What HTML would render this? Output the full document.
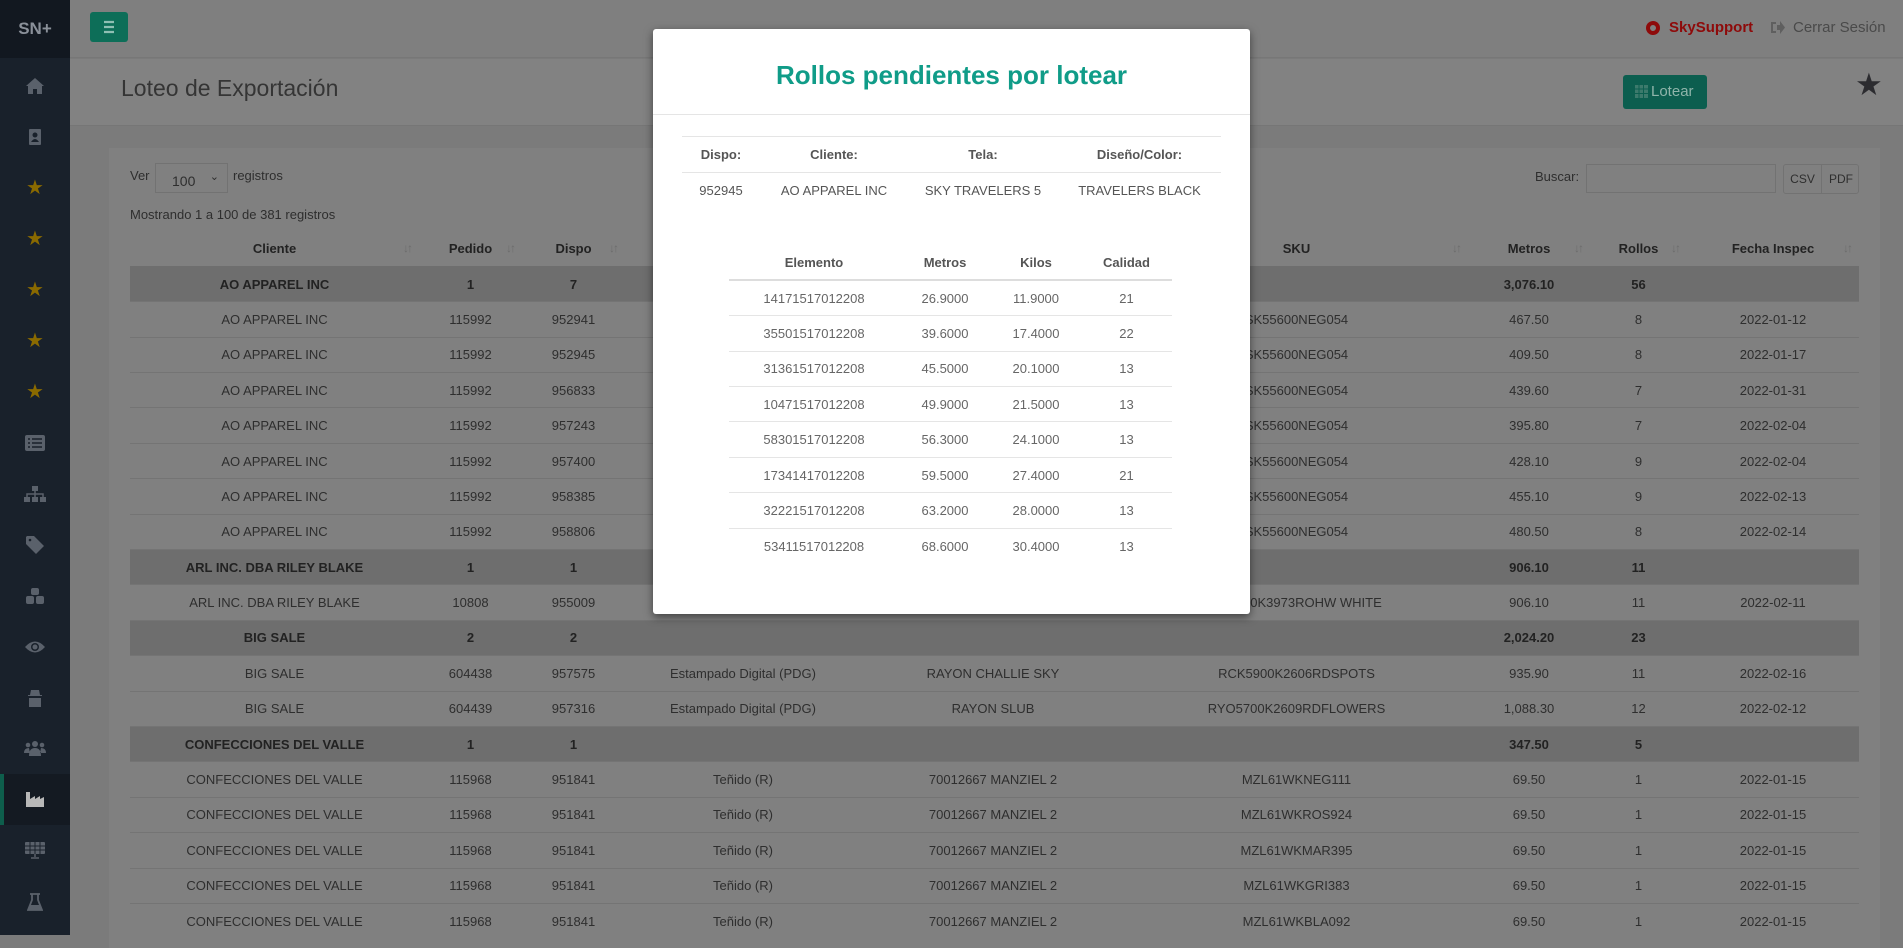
<!DOCTYPE html>
<html><head><meta charset="utf-8">
<style>
*{box-sizing:border-box;margin:0;padding:0}
body{width:1903px;height:935px;overflow:hidden;background:#7b7b7b;font-family:"Liberation Sans",sans-serif;font-size:13px;color:#333;position:relative}
.sb{position:absolute;left:0;top:0;width:70px;height:935px;background:#19212b}
.logo{height:58px;background:#121820;color:#8a9099;font-weight:bold;font-size:17px;text-align:center;line-height:58px}
.ic{position:absolute;left:0;width:70px;height:51px;display:flex;align-items:center;justify-content:center}
.top{position:absolute;left:70px;top:0;right:0;height:58px;background:#7f7f7f;border-bottom:1px solid #777}
.menu{position:absolute;left:90px;top:12px;width:38px;height:30px;background:#0d6e58;border-radius:3px}
.tbar{position:absolute;left:70px;top:59px;right:0;height:67px;background:#828282;border-bottom:1px solid #767676}
.title{position:absolute;left:121px;top:75px;font-size:23px;color:#353535}
.card{position:absolute;left:109px;top:148px;width:1771px;height:800px;background:#808080}
table.m{position:absolute;left:130px;top:231px;width:1729px;border-collapse:collapse;table-layout:fixed}
table.m td,table.m th{height:35.4px;text-align:center;color:#2e2e2e;font-size:13px;border-top:1px solid #747474;white-space:nowrap;overflow:hidden;position:relative}
table.m th{color:#222;font-weight:bold;border-top:none;border-bottom:1px solid #6e6e6e}
table.m tr.g td{background:#6e6e6e;font-weight:bold;color:#222}
.s{position:absolute;right:8px;top:10px;color:#6c6c6c;font-size:12px;letter-spacing:-2px}
.modal{position:absolute;left:653px;top:29px;width:597px;height:585px;background:#fff;border-radius:3px;box-shadow:0 3px 9px rgba(0,0,0,.5)}
.mt{height:86px;border-bottom:1px solid #e5e5e5;text-align:center;font-size:26px;font-weight:bold;color:#109c88;line-height:92px}
table.i{position:absolute;left:29px;top:107px;width:539px;border-collapse:collapse;border-top:1px solid #e5e5e5}
table.i th,table.i td{height:36px;text-align:center;color:#555;font-size:13px}
table.i th{border-bottom:1px solid #e5e5e5;font-weight:bold}
table.e{position:absolute;left:76px;top:216px;width:443px;border-collapse:collapse}
table.e th,table.e td{height:35.4px;text-align:center;color:#666;font-size:13px}
table.e th{border-bottom:2px solid #ddd;color:#555;font-weight:bold}
table.e td{border-bottom:1px solid #e5e5e5}
table.e tr:last-child td{border-bottom:none}
</style></head><body>
<div class="sb">
<div class="logo">SN+</div>
<div class="ic" style="top:60px"><svg width="20" height="18" viewBox="0 0 20 18"><path d="M10 1 L1 9 H3 V17 H8 V12 H12 V17 H17 V9 H19 Z" fill="#5a616b"/></svg></div>
<div class="ic" style="top:111px"><svg width="14" height="18"><rect x="1" y="1" width="12" height="16" rx="1" fill="#5a616b"/><circle cx="7" cy="7" r="2.5" fill="#19212b"/><path d="M3 14 Q7 8 11 14Z" fill="#19212b"/></svg></div>
<div class="ic" style="top:162px;color:#8a6a00;font-size:20px">★</div>
<div class="ic" style="top:213px;color:#8a6a00;font-size:20px">★</div>
<div class="ic" style="top:264px;color:#8a6a00;font-size:20px">★</div>
<div class="ic" style="top:315px;color:#8a6a00;font-size:20px">★</div>
<div class="ic" style="top:366px;color:#8a6a00;font-size:20px">★</div>
<div class="ic" style="top:417px"><svg width="20" height="16"><rect x="0" y="0" width="20" height="16" rx="2" fill="#5a616b"/><path d="M3 4h2M7 4h10M3 8h2M7 8h10M3 12h2M7 12h10" stroke="#19212b" stroke-width="1.5"/></svg></div>
<div class="ic" style="top:468px"><svg width="22" height="16"><rect x="8" y="0" width="6" height="5" fill="#5a616b"/><path d="M11 5v3M3 11V8h16v3M11 8v3" stroke="#5a616b" stroke-width="1.5" fill="none"/><rect x="0" y="11" width="6" height="5" fill="#5a616b"/><rect x="8" y="11" width="6" height="5" fill="#5a616b"/><rect x="16" y="11" width="6" height="5" fill="#5a616b"/></svg></div>
<div class="ic" style="top:519px"><svg width="18" height="18"><path d="M0 1v7l10 10 8-8L8 0H1Z" fill="#5a616b"/><circle cx="4" cy="4" r="1.3" fill="#19212b"/></svg></div>
<div class="ic" style="top:570px"><svg width="18" height="16"><rect x="5" y="0" width="8" height="7" rx="2" fill="#5a616b"/><rect x="0" y="8" width="8" height="8" rx="2" fill="#5a616b"/><rect x="10" y="8" width="8" height="8" rx="2" fill="#5a616b"/></svg></div>
<div class="ic" style="top:621px"><svg width="22" height="14"><path d="M1 7Q11 -4 21 7Q11 18 1 7Z" fill="#5a616b"/><circle cx="11" cy="7" r="4" fill="#19212b"/><circle cx="11" cy="7" r="2.5" fill="#5a616b"/></svg></div>
<div class="ic" style="top:672px"><svg width="16" height="18"><path d="M4 1h8l1 5H3Z M1 6h14v1H1Z M2 9h12v9H2Z" fill="#5a616b"/></svg></div>
<div class="ic" style="top:723px"><svg width="22" height="15"><circle cx="11" cy="3" r="3" fill="#5a616b"/><circle cx="4" cy="4" r="2.3" fill="#5a616b"/><circle cx="18" cy="4" r="2.3" fill="#5a616b"/><path d="M5 15q0-8 6-8t6 8Z M0 12q0-5 5-5l1 5Z M22 12q0-5-5-5l-1 5Z" fill="#5a616b"/></svg></div>
<div class="ic" style="top:774px;background:#141a22"><div style="position:absolute;left:0;top:0;width:4px;height:51px;background:#0e5e4c"></div><svg width="18" height="15"><path d="M0 15V0h4v7l5-3v3l5-3v3l4-2v10Z" fill="#b8b8b8"/></svg></div>
<div class="ic" style="top:825px"><svg width="20" height="17"><rect x="0" y="0" width="20" height="12" rx="1" fill="#5a616b"/><path d="M0 4h20M0 8h20M5 0v12M10 0v12M15 0v12" stroke="#19212b" stroke-width="1"/><path d="M10 12v3M6 16h8" stroke="#5a616b" stroke-width="1.5"/></svg></div>
<div class="ic" style="top:876px"><svg width="16" height="18"><path d="M3 1h10M5 1v6L1 17h14L11 7V1" stroke="#5a616b" stroke-width="1.8" fill="none"/><path d="M3 12h10l2 5H1Z" fill="#5a616b"/></svg></div>
</div>
<div class="top"></div>
<div style="position:absolute;left:1646px;top:21px;width:14px;height:14px;border-radius:50%;background:#8e0a0a"><div style="position:absolute;left:4px;top:4px;width:6px;height:6px;border-radius:50%;background:#7f7f7f"></div></div>
<div style="position:absolute;left:1669px;top:19px;color:#8e0a0a;font-size:15px;font-weight:bold">SkySupport</div>
<svg style="position:absolute;left:1771px;top:21px" width="14" height="13"><path d="M0 1h5v2H2v7h3v2H0Z M6 4h3V0l5 6.5L9 13V9H6Z" fill="#5f5f5f"/></svg>
<div style="position:absolute;left:1793px;top:19px;color:#4a4a4a;font-size:15px">Cerrar Sesión</div>
<div class="menu"><svg width="38" height="30"><path d="M14 10h10M14 15h10M14 20h10" stroke="#8fbfb3" stroke-width="2.2"/></svg></div>
<div class="tbar"></div>
<div class="title">Loteo de Exportación</div>
<div style="position:absolute;left:1623px;top:75px;width:84px;height:34px;background:#0c5e4f;border-radius:3px;color:#8fb4aa;font-size:15px;line-height:34px;padding-left:28px">Lotear<svg style="position:absolute;left:12px;top:10px" width="13" height="13"><path d="M0 0h13v13H0Z" fill="#3c7a6c"/><path d="M4 0v13M8.5 0v13M0 4h13M0 8.5h13" stroke="#0c5e4f"/></svg></div>
<div style="position:absolute;left:1855px;top:67px;font-size:31px;color:#2c2c30">★</div>
<div class="card"></div>
<div style="position:absolute;left:130px;top:168px;color:#2e2e2e">Ver</div>
<div style="position:absolute;left:155px;top:163px;width:73px;height:30px;border:1px solid #727272;color:#2e2e2e;font-size:14px;padding:9px 0 0 16px">100<span style="position:absolute;right:8px;top:6px;font-size:11px">⌄</span></div>
<div style="position:absolute;left:233px;top:168px;color:#2e2e2e">registros</div>
<div style="position:absolute;left:130px;top:207px;color:#2e2e2e">Mostrando 1 a 100 de 381 registros</div>
<div style="position:absolute;left:1535px;top:169px;color:#2e2e2e">Buscar:</div>
<div style="position:absolute;left:1586px;top:164px;width:190px;height:29px;border:1px solid #727272"></div>
<div style="position:absolute;left:1783px;top:164px;width:76px;height:30px;border:1px solid #727272;border-radius:3px;color:#2e2e2e;font-size:12px;line-height:28px"><span style="position:absolute;left:0;width:38px;text-align:center;border-right:1px solid #727272">CSV</span><span style="position:absolute;left:38px;width:38px;text-align:center">PDF</span></div>
<table class="m">
<colgroup><col style="width:289px"><col style="width:103px"><col style="width:103px"><col style="width:236px"><col style="width:264px"><col style="width:343px"><col style="width:122px"><col style="width:97px"><col style="width:172px"></colgroup>
<tr><th>Cliente<span class="s">↓↑</span></th><th>Pedido<span class="s">↓↑</span></th><th>Dispo<span class="s">↓↑</span></th><th>Proceso<span class="s">↓↑</span></th><th>Tela<span class="s">↓↑</span></th><th>SKU<span class="s">↓↑</span></th><th>Metros<span class="s">↓↑</span></th><th>Rollos<span class="s">↓↑</span></th><th>Fecha Inspec<span class="s">↓↑</span></th></tr>
<tr class="g"><td>AO APPAREL INC</td><td>1</td><td>7</td><td></td><td></td><td></td><td>3,076.10</td><td>56</td><td></td></tr>
<tr><td>AO APPAREL INC</td><td>115992</td><td>952941</td><td>Estampado</td><td>SKY TRAVELERS</td><td>SK55600NEG054</td><td>467.50</td><td>8</td><td>2022-01-12</td></tr>
<tr><td>AO APPAREL INC</td><td>115992</td><td>952945</td><td>Estampado</td><td>SKY TRAVELERS</td><td>SK55600NEG054</td><td>409.50</td><td>8</td><td>2022-01-17</td></tr>
<tr><td>AO APPAREL INC</td><td>115992</td><td>956833</td><td>Estampado</td><td>SKY TRAVELERS</td><td>SK55600NEG054</td><td>439.60</td><td>7</td><td>2022-01-31</td></tr>
<tr><td>AO APPAREL INC</td><td>115992</td><td>957243</td><td>Estampado</td><td>SKY TRAVELERS</td><td>SK55600NEG054</td><td>395.80</td><td>7</td><td>2022-02-04</td></tr>
<tr><td>AO APPAREL INC</td><td>115992</td><td>957400</td><td>Estampado</td><td>SKY TRAVELERS</td><td>SK55600NEG054</td><td>428.10</td><td>9</td><td>2022-02-04</td></tr>
<tr><td>AO APPAREL INC</td><td>115992</td><td>958385</td><td>Estampado</td><td>SKY TRAVELERS</td><td>SK55600NEG054</td><td>455.10</td><td>9</td><td>2022-02-13</td></tr>
<tr><td>AO APPAREL INC</td><td>115992</td><td>958806</td><td>Estampado</td><td>SKY TRAVELERS</td><td>SK55600NEG054</td><td>480.50</td><td>8</td><td>2022-02-14</td></tr>
<tr class="g"><td>ARL INC. DBA RILEY BLAKE</td><td>1</td><td>1</td><td></td><td></td><td></td><td>906.10</td><td>11</td><td></td></tr>
<tr><td>ARL INC. DBA RILEY BLAKE</td><td>10808</td><td>955009</td><td>Estampado</td><td>RILEY</td><td>SK4500K3973ROHW WHITE</td><td>906.10</td><td>11</td><td>2022-02-11</td></tr>
<tr class="g"><td>BIG SALE</td><td>2</td><td>2</td><td></td><td></td><td></td><td>2,024.20</td><td>23</td><td></td></tr>
<tr><td>BIG SALE</td><td>604438</td><td>957575</td><td>Estampado Digital (PDG)</td><td>RAYON CHALLIE SKY</td><td>RCK5900K2606RDSPOTS</td><td>935.90</td><td>11</td><td>2022-02-16</td></tr>
<tr><td>BIG SALE</td><td>604439</td><td>957316</td><td>Estampado Digital (PDG)</td><td>RAYON SLUB</td><td>RYO5700K2609RDFLOWERS</td><td>1,088.30</td><td>12</td><td>2022-02-12</td></tr>
<tr class="g"><td>CONFECCIONES DEL VALLE</td><td>1</td><td>1</td><td></td><td></td><td></td><td>347.50</td><td>5</td><td></td></tr>
<tr><td>CONFECCIONES DEL VALLE</td><td>115968</td><td>951841</td><td>Teñido (R)</td><td>70012667 MANZIEL 2</td><td>MZL61WKNEG111</td><td>69.50</td><td>1</td><td>2022-01-15</td></tr>
<tr><td>CONFECCIONES DEL VALLE</td><td>115968</td><td>951841</td><td>Teñido (R)</td><td>70012667 MANZIEL 2</td><td>MZL61WKROS924</td><td>69.50</td><td>1</td><td>2022-01-15</td></tr>
<tr><td>CONFECCIONES DEL VALLE</td><td>115968</td><td>951841</td><td>Teñido (R)</td><td>70012667 MANZIEL 2</td><td>MZL61WKMAR395</td><td>69.50</td><td>1</td><td>2022-01-15</td></tr>
<tr><td>CONFECCIONES DEL VALLE</td><td>115968</td><td>951841</td><td>Teñido (R)</td><td>70012667 MANZIEL 2</td><td>MZL61WKGRI383</td><td>69.50</td><td>1</td><td>2022-01-15</td></tr>
<tr><td>CONFECCIONES DEL VALLE</td><td>115968</td><td>951841</td><td>Teñido (R)</td><td>70012667 MANZIEL 2</td><td>MZL61WKBLA092</td><td>69.50</td><td>1</td><td>2022-01-15</td></tr>
</table>
<div class="modal">
<div class="mt">Rollos pendientes por lotear</div>
<table class="i">
<tr><th style="width:78px">Dispo:</th><th style="width:148px">Cliente:</th><th style="width:150px">Tela:</th><th>Diseño/Color:</th></tr>
<tr><td>952945</td><td>AO APPAREL INC</td><td>SKY TRAVELERS 5</td><td>TRAVELERS BLACK</td></tr>
</table>
<table class="e">
<tr><th style="width:170px">Elemento</th><th style="width:92px">Metros</th><th style="width:90px">Kilos</th><th>Calidad</th></tr>
<tr><td>14171517012208</td><td>26.9000</td><td>11.9000</td><td>21</td></tr>
<tr><td>35501517012208</td><td>39.6000</td><td>17.4000</td><td>22</td></tr>
<tr><td>31361517012208</td><td>45.5000</td><td>20.1000</td><td>13</td></tr>
<tr><td>10471517012208</td><td>49.9000</td><td>21.5000</td><td>13</td></tr>
<tr><td>58301517012208</td><td>56.3000</td><td>24.1000</td><td>13</td></tr>
<tr><td>17341417012208</td><td>59.5000</td><td>27.4000</td><td>21</td></tr>
<tr><td>32221517012208</td><td>63.2000</td><td>28.0000</td><td>13</td></tr>
<tr><td>53411517012208</td><td>68.6000</td><td>30.4000</td><td>13</td></tr>
</table>
</div>
</body></html>
